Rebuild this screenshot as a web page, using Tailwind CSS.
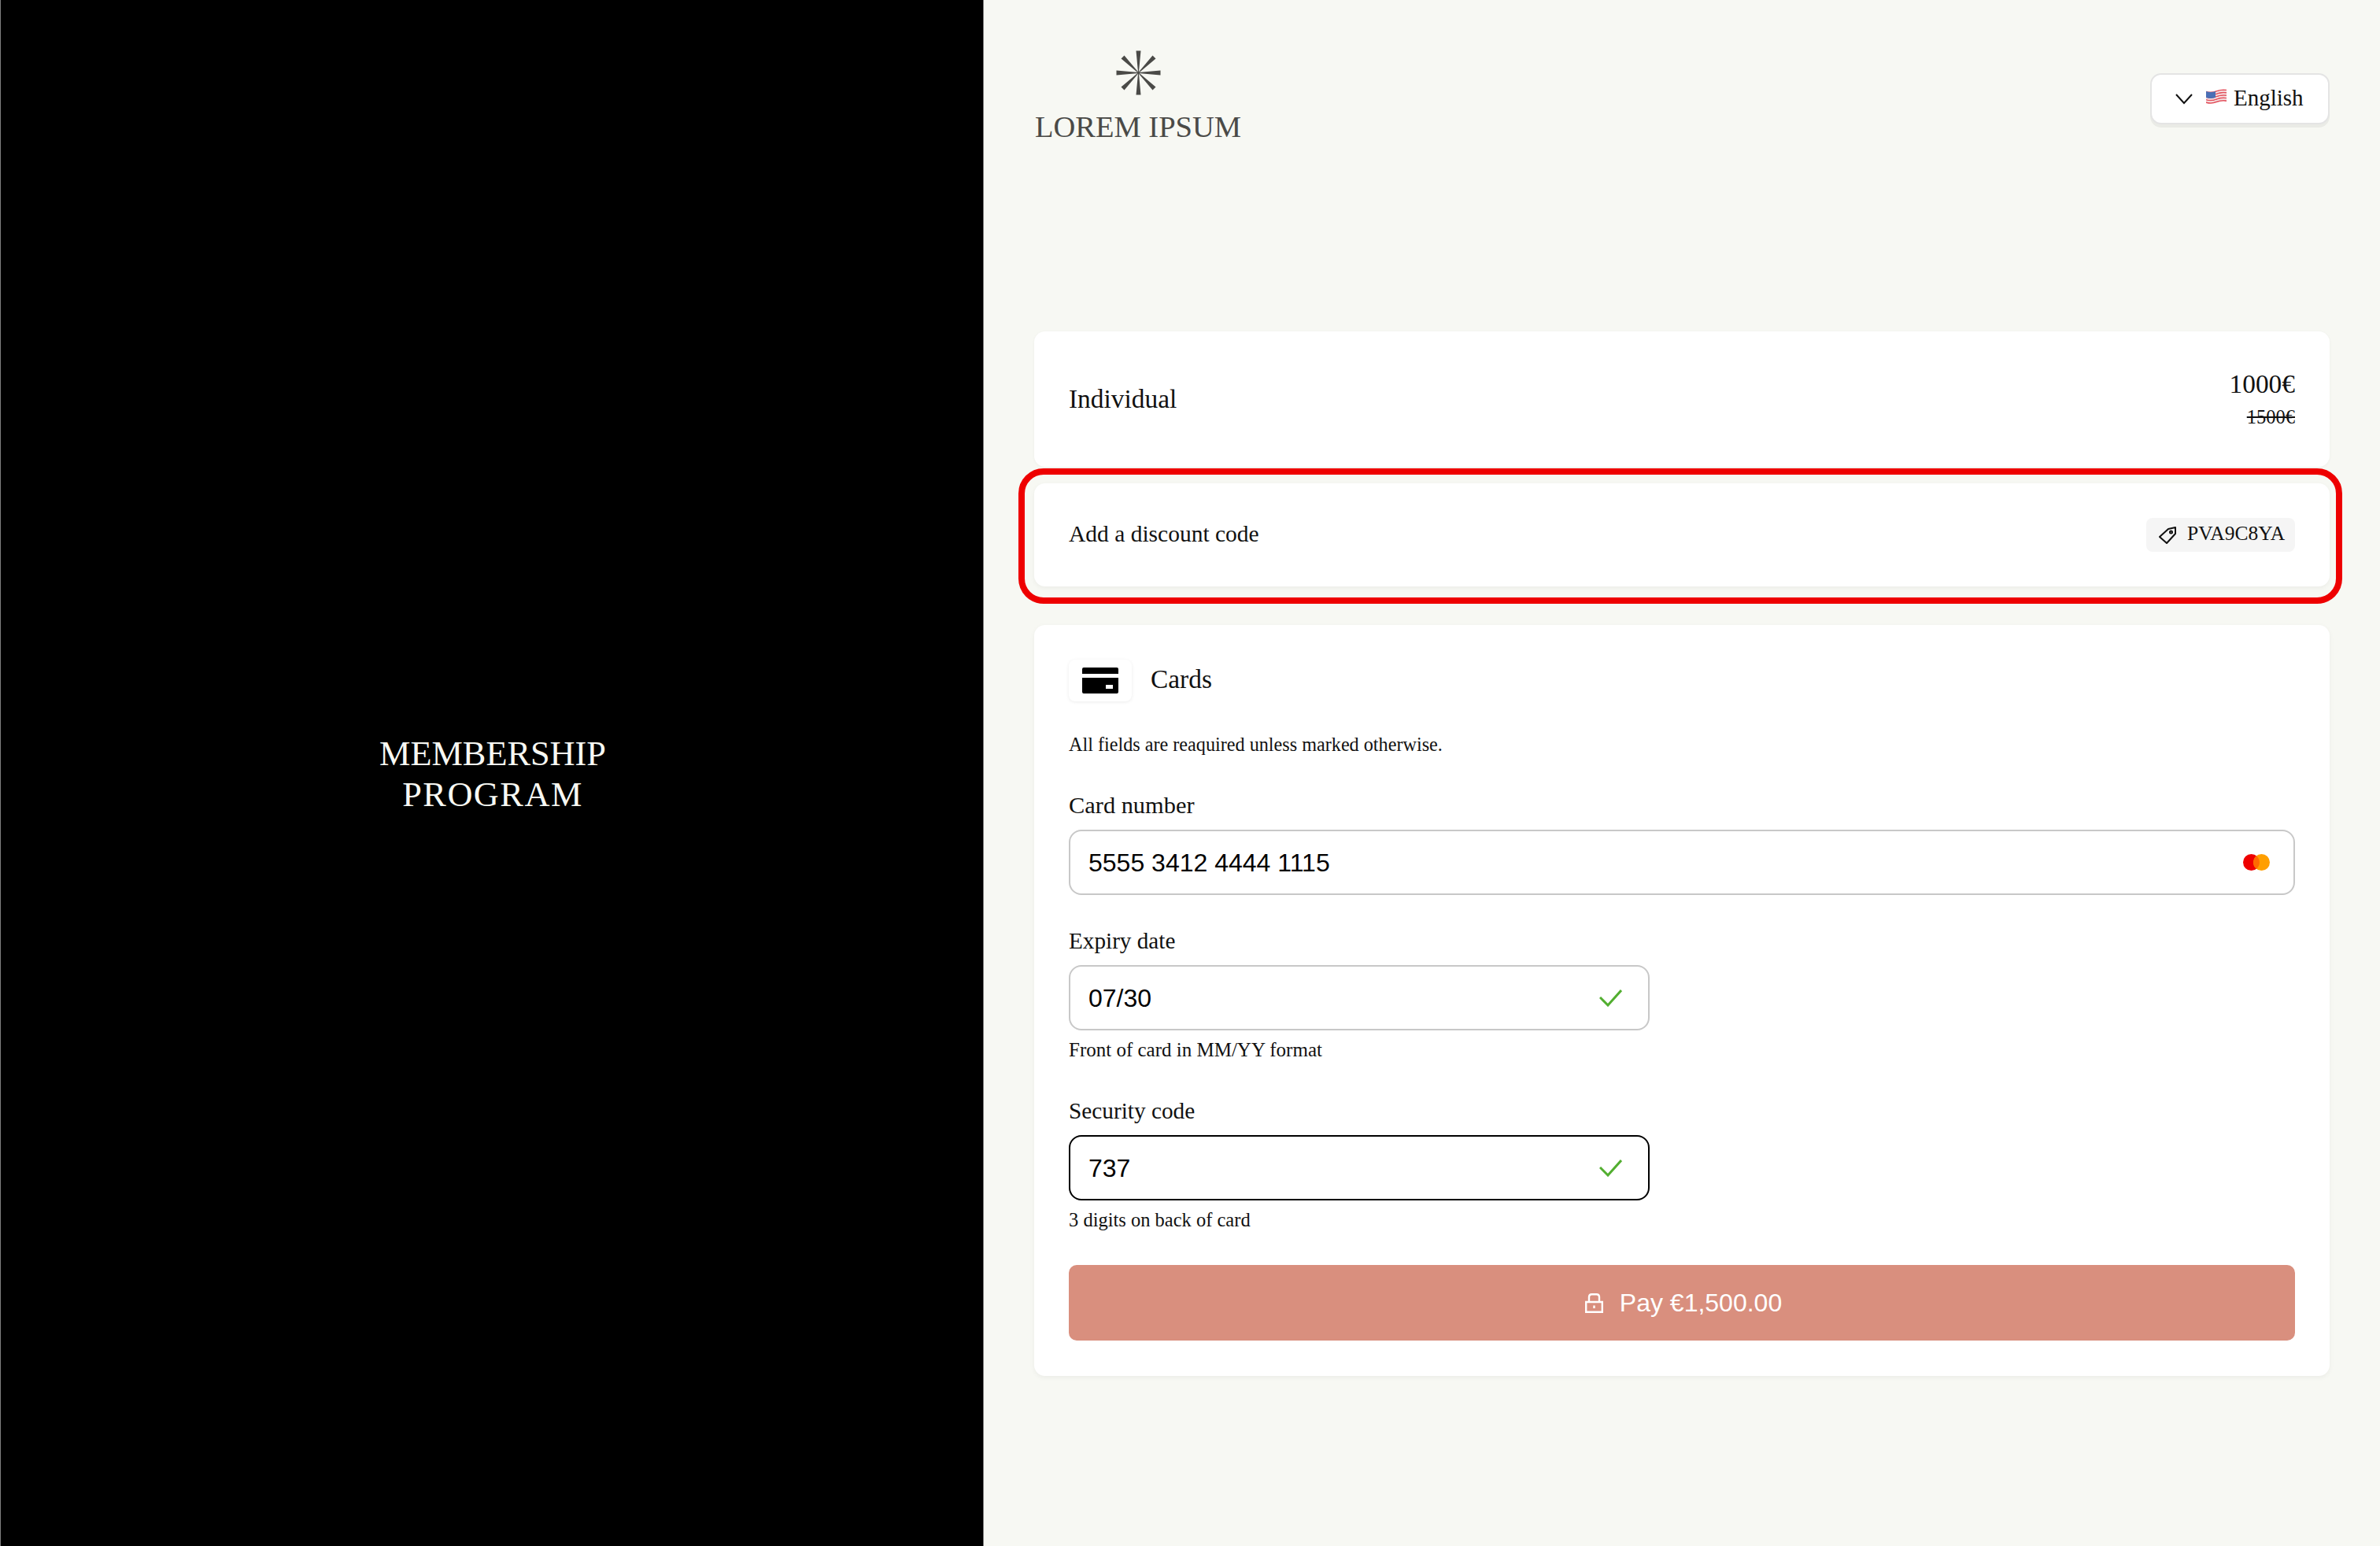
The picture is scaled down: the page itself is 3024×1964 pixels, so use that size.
<!DOCTYPE html>
<html lang="en">
<head>
    <meta charset="UTF-8">
    <meta name="viewport" content="width=device-width, initial-scale=1.0">
    <title>Membership Program</title>
    <script src="https://cdn.jsdelivr.net/npm/@tailwindcss/browser@4"></script>
</head>
<body class="bg-[#f7f8f3] font-['Liberation_Serif',serif] text-[#111111]">
    <div class="flex h-[1964px] w-[3024px] overflow-hidden">
        <!-- left panel -->
        <div class="flex w-[1250px] shrink-0 items-center justify-center border-x border-[#808080] bg-black">
            <h1 class="mt-[4px] pl-[2px] text-center text-[44.3px] leading-[52px] text-[#f7f8f3]">MEMBERSHIP<br><span class="tracking-[1.5px]">PROGRAM</span></h1>
        </div>

        <!-- checkout -->
        <div class="flex-1 px-[64px] pt-[64px]">
            <header class="flex items-start justify-between">
                <div class="flex w-[264px] flex-col items-center">
                    <svg class="h-[57px] w-[57px]" viewBox="-28.5 -28.5 57 57" fill="#4a4a47">
                        <polygon points="-3,-28 3,-28 0.4,0 -0.4,0"/>
                        <polygon points="-3,28 3,28 0.4,0 -0.4,0"/>
                        <polygon points="-28,-3 -28,3 0,0.4 0,-0.4"/>
                        <polygon points="28,-3 28,3 0,0.4 0,-0.4"/>
                        <polygon points="-22,-18 -18,-22 0.3,-0.3 -0.3,0.3"/>
                        <polygon points="22,-18 18,-22 -0.3,-0.3 0.3,0.3"/>
                        <polygon points="-22,18 -18,22 0.3,0.3 -0.3,-0.3"/>
                        <polygon points="22,18 18,22 -0.3,0.3 0.3,-0.3"/>
                    </svg>
                    <div class="mt-[18px] text-[38.5px] leading-[44px] whitespace-nowrap text-[#4a4a47]">LOREM IPSUM</div>
                </div>
                <button class="mt-[29px] flex h-[65px] w-[228px] items-center rounded-[14px] border-2 border-[#e4e4e4] bg-white pl-[30px] text-[29px] shadow-[0_4px_0_rgba(0,0,0,0.05)]">
                    <svg class="h-[14px] w-[22px]" viewBox="0 0 22 14" fill="none" stroke="#111111" stroke-width="2"><path d="M1 1l10 11L21 1"/></svg>
                    <svg class="mt-[-6px] ml-[17px] h-[19px] w-[26px]" viewBox="0 0 26 19">
                        <g fill="none" stroke-width="1.6">
                            <path stroke="#e2505c" d="M0 3.5Q7 5.5 13 3T26 1.5"/>
                            <path stroke="#f4dfe0" d="M0 5.2Q7 7.2 13 4.7T26 3.2"/>
                            <path stroke="#e2505c" d="M0 6.9Q7 8.9 13 6.4T26 4.9"/>
                            <path stroke="#f4dfe0" d="M0 8.6Q7 10.6 13 8.1T26 6.6"/>
                            <path stroke="#e2505c" d="M0 10.3Q7 12.3 13 9.8T26 8.3"/>
                            <path stroke="#f4dfe0" d="M0 12Q7 14 13 11.5T26 10"/>
                            <path stroke="#e2505c" d="M0 13.7Q7 15.7 13 13.2T26 11.7"/>
                            <path stroke="#f4dfe0" d="M0 15.4Q7 17.4 13 14.9T26 13.4"/>
                            <path stroke="#e2505c" d="M0 17.1Q7 19.1 13 16.6T26 15.1"/>
                        </g>
                        <path fill="#4a6fb5" d="M0 3Q6 5 12 3V11Q6 13 0 11Z"/>
                    </svg>
                    <span class="mt-[-2px] ml-[9px]">English</span>
                </button>
            </header>

            <main class="mt-[238px]">
                <section class="flex h-[172px] items-center justify-between rounded-[14px] bg-white px-[44px] shadow-[0_1px_4px_rgba(0,0,0,0.04)]">
                    <span class="text-[33.4px]">Individual</span>
                    <div class="text-right">
                        <div class="text-[33.4px] leading-[40px]">1000€</div>
                        <div class="mt-[5px] text-[24.5px] leading-[34px] line-through">1500€</div>
                    </div>
                </section>

                <section class="relative mt-[21px] flex h-[131px] items-center justify-between rounded-[14px] bg-white px-[44px] shadow-[0_2px_6px_rgba(0,0,0,0.05)]">
                    <span class="mt-[-2px] text-[29.5px]">Add a discount code</span>
                    <span class="flex h-[43px] w-[189px] items-center rounded-[8px] bg-[#f5f5f5] pl-[16px] text-[25.5px]">
                        <svg class="h-[22px] w-[22px]" viewBox="0 0 22 22" fill="none" stroke="#111111" stroke-width="2" stroke-linejoin="round"><path d="M1 13L12 3l9-2v8L10 21z"/><circle cx="15.5" cy="7" r="1.5"/></svg>
                        <span class="mt-[-2px] ml-[14px]">PVA9C8YA</span>
                    </span>
                    <!-- annotation ring -->
                    <div class="pointer-events-none absolute top-[-19px] right-[-16px] bottom-[-22px] left-[-20px] rounded-[32px] border-[8px] border-[#ee0000]"></div>
                </section>

                <section class="mt-[49px] rounded-[14px] bg-white px-[44px] pt-[44px] pb-[45px] shadow-[0_2px_6px_rgba(0,0,0,0.05)]">
                    <div class="flex h-[53px] items-center">
                        <span class="flex h-[53px] w-[80px] items-center justify-center rounded-[8px] bg-white shadow-[0_1px_4px_rgba(0,0,0,0.08)]">
                            <svg class="h-[33px] w-[46px]" viewBox="0 0 46 33"><path fill-rule="evenodd" d="M2 0h42a2 2 0 0 1 2 2v6H0V2a2 2 0 0 1 2-2zM0 13h46v18a2 2 0 0 1-2 2H2a2 2 0 0 1-2-2zM30 22v5h9v-5z"/></svg>
                        </span>
                        <span class="mt-[-2px] ml-[24px] text-[33.4px]">Cards</span>
                    </div>
                    <p class="mt-[38px] text-[24.2px] leading-[34px]">All fields are reaquired unless marked otherwise.</p>

                    <label class="mt-[42px] mb-[13px] block text-[30.4px] leading-[36px]">Card number</label>
                    <div class="flex h-[83px] items-center rounded-[16px] border-2 border-[#c8c8c8] pr-[30px] pl-[23px]">
                        <input class="min-w-0 flex-1 bg-transparent font-['Liberation_Sans',sans-serif] text-[32px] text-black outline-none" value="5555 3412 4444 1115">
                        <svg class="h-[21px] w-[34px]" viewBox="0 0 34 21">
                            <circle cx="10.5" cy="10.5" r="10.5" fill="#ee0000"/>
                            <circle cx="23.5" cy="10.5" r="10.5" fill="#ff9f00"/>
                            <path fill="#ff6a00" d="M17 2.3a10.5 10.5 0 0 1 0 16.4a10.5 10.5 0 0 1 0-16.4z"/>
                        </svg>
                    </div>

                    <label class="mt-[40px] mb-[13px] block text-[29.2px] leading-[36px]">Expiry date</label>
                    <div class="flex h-[83px] w-[738px] items-center rounded-[16px] border-2 border-[#c8c8c8] pr-[33px] pl-[23px]">
                        <input class="min-w-0 flex-1 bg-transparent font-['Liberation_Sans',sans-serif] text-[32px] text-black outline-none" value="07/30">
                        <svg class="h-[22px] w-[29px]" viewBox="0 0 29 22" fill="none" stroke="#52ae30" stroke-width="3"><path d="M1 10l10 10L28 1"/></svg>
                    </div>
                    <p class="mt-[8px] text-[25px] leading-[34px]">Front of card in MM/YY format</p>

                    <label class="mt-[42px] mb-[13px] block text-[29.3px] leading-[36px]">Security code</label>
                    <div class="flex h-[83px] w-[738px] items-center rounded-[16px] border-2 border-black pr-[33px] pl-[23px]">
                        <input class="min-w-0 flex-1 bg-transparent font-['Liberation_Sans',sans-serif] text-[32px] text-black outline-none" value="737">
                        <svg class="h-[22px] w-[29px]" viewBox="0 0 29 22" fill="none" stroke="#52ae30" stroke-width="3"><path d="M1 10l10 10L28 1"/></svg>
                    </div>
                    <p class="mt-[8px] text-[24.5px] leading-[34px]">3 digits on back of card</p>

                    <button class="mt-[40px] flex h-[96px] w-full items-center justify-center rounded-[10px] bg-[#d98f7e] pl-[4px] font-['Liberation_Sans',sans-serif] text-[32px] text-white">
                        <svg class="h-[25px] w-[23px]" viewBox="0 0 23 25" fill="none" stroke="#ffffff" stroke-width="2.4"><path d="M1.2 11h20.6v12.8H1.2zM5 11V4.5A3.5 3.5 0 0 1 8.5 1.2h6A3.5 3.5 0 0 1 18 4.5V11M11.5 15.5v3.5"/></svg>
                        <span class="ml-[21px]">Pay €1,500.00</span>
                    </button>
                </section>
            </main>
        </div>
    </div>
</body>
</html>
